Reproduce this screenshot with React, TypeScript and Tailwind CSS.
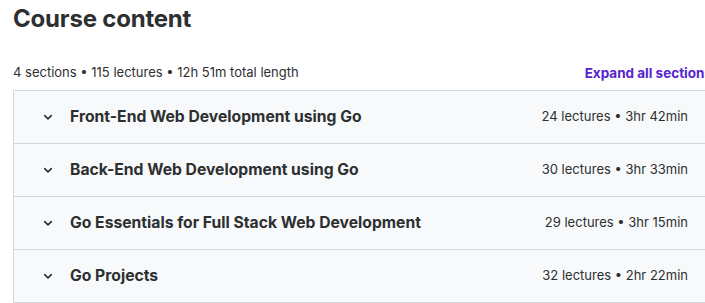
import React from "react";

const sections = [
  { title: "Front-End Web Development using Go", meta: "24 lectures • 3hr 42min" },
  { title: "Back-End Web Development using Go", meta: "30 lectures • 3hr 33min" },
  { title: "Go Essentials for Full Stack Web Development", meta: "29 lectures • 3hr 15min" },
  { title: "Go Projects", meta: "32 lectures • 2hr 22min" },
];

function Chevron() {
  return (
    <svg width="10" height="10" viewBox="0 0 10 10" fill="none" className="shrink-0">
      <path d="M1.7 3.6 L5 6.9 L8.3 3.6" stroke="#2d2f31" strokeWidth="1.6" strokeLinecap="round" strokeLinejoin="round" />
    </svg>
  );
}

export default function App() {
  return (
    <div className="w-[705px] h-[303px] overflow-hidden bg-white text-[#2d2f31]" style={{ fontFamily: "Inter, 'Noto Sans', sans-serif" }}>
      <div className="w-[712px] pl-[13px]">
        <h2 className="text-[24px] leading-[30px] font-bold pt-[4px] tracking-[-0.2px]">Course content</h2>
        <div className="flex items-center justify-between mt-[30px] h-[18px]">
          <span className="text-[13px] text-[#2d2f31]">4 sections • 115 lectures • 12h 51m total length</span>
          <span className="text-[13.5px] font-bold text-[#5624d0] whitespace-nowrap">Expand all sections</span>
        </div>
        <div className="mt-[8px] border-t border-l border-[#d1d7dc]">
          {sections.map((s, i) => (
            <div
              key={i}
              className="flex items-center h-[53px] bg-[#f7f9fa] pl-[29px] pr-[24px] border-b border-[#d1d7dc]"
            >
              <Chevron />
              <span className="ml-[17px] text-[15.7px] font-bold text-[#2d2f31] flex-1">{s.title}</span>
              <span className="text-[13px] text-[#2d2f31]">{s.meta}</span>
            </div>
          ))}
        </div>
      </div>
    </div>
  );
}
